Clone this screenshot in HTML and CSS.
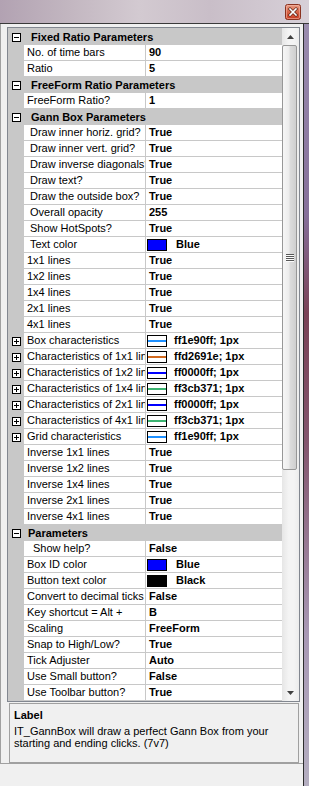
FILE: index.html
```html
<!DOCTYPE html>
<html lang="en">
<head>
  <meta charset="UTF-8">
  <title>IT_GannBox Properties</title>
  <link rel="stylesheet" href="styles.css">
</head>
<body>
  <div class="titlebar">
    <span class="close">
      <svg width="16" height="16" viewBox="0 0 16 16">
        <defs>
          <linearGradient id="closeBg" x1="0" y1="0" x2="0" y2="1">
            <stop offset="0" stop-color="#eba08a"/>
            <stop offset="0.45" stop-color="#d8674a"/>
            <stop offset="1" stop-color="#c8391f"/>
          </linearGradient>
        </defs>
        <rect x="0.5" y="0.5" width="15" height="15" rx="2" fill="url(#closeBg)" stroke="#8a3220"/>
        <rect x="1.5" y="1.5" width="13" height="13" rx="1.5" fill="none" stroke="#f2b8a6" stroke-opacity="0.6"/>
        <path d="M5 5 L11 11 M11 5 L5 11" stroke="#5a2418" stroke-width="3" stroke-linecap="square"/>
        <path d="M5 5 L11 11 M11 5 L5 11" stroke="#ffffff" stroke-width="1.6" stroke-linecap="square"/>
      </svg>
    </span>
  </div>

  <div class="window">
    <div class="client">
      <div class="panel">
        <div class="grid">
          <div class="rows">
            <div class="row cat">
              <div class="gutter"><span class="glyph minus"></span></div>
              <div class="label">Fixed Ratio Parameters</div>
            </div>
            <div class="row"><div class="gutter"></div><div class="name">No. of time bars</div><div class="value">90</div></div>
            <div class="row"><div class="gutter"></div><div class="name">Ratio</div><div class="value">5</div></div>

            <div class="row cat">
              <div class="gutter"><span class="glyph minus"></span></div>
              <div class="label">FreeForm Ratio Parameters</div>
            </div>
            <div class="row"><div class="gutter"></div><div class="name">FreeForm Ratio?</div><div class="value">1</div></div>

            <div class="row cat">
              <div class="gutter"><span class="glyph minus"></span></div>
              <div class="label">Gann Box Parameters</div>
            </div>
            <div class="row"><div class="gutter"></div><div class="name ind1">Draw inner horiz. grid?</div><div class="value">True</div></div>
            <div class="row"><div class="gutter"></div><div class="name ind1">Draw inner vert. grid?</div><div class="value">True</div></div>
            <div class="row"><div class="gutter"></div><div class="name ind1">Draw inverse diagonals?</div><div class="value">True</div></div>
            <div class="row"><div class="gutter"></div><div class="name ind1">Draw text?</div><div class="value">True</div></div>
            <div class="row"><div class="gutter"></div><div class="name ind1">Draw the outside box?</div><div class="value">True</div></div>
            <div class="row"><div class="gutter"></div><div class="name ind1">Overall opacity</div><div class="value">255</div></div>
            <div class="row"><div class="gutter"></div><div class="name ind1">Show HotSpots?</div><div class="value">True</div></div>
            <div class="row"><div class="gutter"></div><div class="name ind1">Text color</div><div class="value"><span class="swatch fill-blue"></span>Blue</div></div>
            <div class="row"><div class="gutter"></div><div class="name">1x1 lines</div><div class="value">True</div></div>
            <div class="row"><div class="gutter"></div><div class="name">1x2 lines</div><div class="value">True</div></div>
            <div class="row"><div class="gutter"></div><div class="name">1x4 lines</div><div class="value">True</div></div>
            <div class="row"><div class="gutter"></div><div class="name">2x1 lines</div><div class="value">True</div></div>
            <div class="row"><div class="gutter"></div><div class="name">4x1 lines</div><div class="value">True</div></div>

            <div class="row"><div class="gutter"><span class="glyph plus"></span></div><div class="name">Box characteristics</div><div class="value"><span class="swatch pen pen-dodger"></span>ff1e90ff; 1px</div></div>
            <div class="row"><div class="gutter"><span class="glyph plus"></span></div><div class="name">Characteristics of 1x1 lines</div><div class="value"><span class="swatch pen pen-choc"></span>ffd2691e; 1px</div></div>
            <div class="row"><div class="gutter"><span class="glyph plus"></span></div><div class="name">Characteristics of 1x2 lines</div><div class="value"><span class="swatch pen pen-blue"></span>ff0000ff; 1px</div></div>
            <div class="row"><div class="gutter"><span class="glyph plus"></span></div><div class="name">Characteristics of 1x4 lines</div><div class="value"><span class="swatch pen pen-green"></span>ff3cb371; 1px</div></div>
            <div class="row"><div class="gutter"><span class="glyph plus"></span></div><div class="name">Characteristics of 2x1 lines</div><div class="value"><span class="swatch pen pen-blue"></span>ff0000ff; 1px</div></div>
            <div class="row"><div class="gutter"><span class="glyph plus"></span></div><div class="name">Characteristics of 4x1 lines</div><div class="value"><span class="swatch pen pen-green"></span>ff3cb371; 1px</div></div>
            <div class="row"><div class="gutter"><span class="glyph plus"></span></div><div class="name">Grid characteristics</div><div class="value"><span class="swatch pen pen-dodger"></span>ff1e90ff; 1px</div></div>

            <div class="row"><div class="gutter"></div><div class="name">Inverse 1x1 lines</div><div class="value">True</div></div>
            <div class="row"><div class="gutter"></div><div class="name">Inverse 1x2 lines</div><div class="value">True</div></div>
            <div class="row"><div class="gutter"></div><div class="name">Inverse 1x4 lines</div><div class="value">True</div></div>
            <div class="row"><div class="gutter"></div><div class="name">Inverse 2x1 lines</div><div class="value">True</div></div>
            <div class="row"><div class="gutter"></div><div class="name">Inverse 4x1 lines</div><div class="value">True</div></div>

            <div class="row cat">
              <div class="gutter"><span class="glyph minus"></span></div>
              <div class="label short">Parameters</div>
            </div>
            <div class="row"><div class="gutter"></div><div class="name ind2">Show help?</div><div class="value">False</div></div>
            <div class="row"><div class="gutter"></div><div class="name">Box ID color</div><div class="value"><span class="swatch fill-blue"></span>Blue</div></div>
            <div class="row"><div class="gutter"></div><div class="name">Button text color</div><div class="value"><span class="swatch fill-black"></span>Black</div></div>
            <div class="row"><div class="gutter"></div><div class="name">Convert to decimal ticks</div><div class="value">False</div></div>
            <div class="row"><div class="gutter"></div><div class="name">Key shortcut = Alt +</div><div class="value">B</div></div>
            <div class="row"><div class="gutter"></div><div class="name">Scaling</div><div class="value">FreeForm</div></div>
            <div class="row"><div class="gutter"></div><div class="name">Snap to High/Low?</div><div class="value">True</div></div>
            <div class="row"><div class="gutter"></div><div class="name">Tick Adjuster</div><div class="value">Auto</div></div>
            <div class="row"><div class="gutter"></div><div class="name">Use Small button?</div><div class="value">False</div></div>
            <div class="row"><div class="gutter"></div><div class="name">Use Toolbar button?</div><div class="value">True</div></div>
          </div>

          <div class="vscroll">
            <div class="arrow">
              <svg width="7" height="4" viewBox="0 0 7 4"><polygon points="3.5,0 7,4 0,4" fill="#404040"/></svg>
            </div>
            <div class="track">
              <div class="thumb"><span class="grip"></span></div>
            </div>
            <div class="arrow">
              <svg width="7" height="4" viewBox="0 0 7 4"><polygon points="0,0 7,0 3.5,4" fill="#404040"/></svg>
            </div>
          </div>
        </div>

        <div class="desc">
          <div class="desc-title">Label</div>
          <div class="desc-text">IT_GannBox will draw a perfect Gann Box from your starting and ending clicks. (7v7)</div>
        </div>
      </div>
    </div>
    <div class="edge"></div>
  </div>
</body>
</html>
```

FILE: styles.css
```css
:root {
  --line: #c8c8c8;
  --frame: #828790;
  --face: #f0f0f0;
}

* {
  box-sizing: border-box;
}

body {
  margin: 0;
  width: 309px;
  height: 786px;
  overflow: hidden;
  background: var(--face);
  font-family: "Liberation Sans", Arial, sans-serif;
  font-size: 11px;
  color: #000;
}

/* title bar */
.titlebar {
  height: 23px;
  display: flex;
  justify-content: flex-end;
  padding: 4px 8px 0 0;
  background: linear-gradient(to right, #b2a2b2 0%, #c2b6c0 22%, #d3cad1 45%, #c9bec8 68%, #d7d0d8 100%);
}

.close {
  width: 16px;
  height: 16px;
  display: block;
}

.close svg {
  display: block;
}

/* window body */
.window {
  display: flex;
  height: 763px;
}

.client {
  width: 304px;
  border-top: 1px solid #3a3a3a;
  border-right: 1px solid #2c2c2c;
  background: var(--face);
}

.edge {
  width: 5px;
  border-top: 1px solid #3a3a3a;
  background: linear-gradient(#9a8cae 0%, #86709a 25%, #7a4256 38%, #84566e 55%, #a898b4 80%, #b4aec0 100%);
}

.panel {
  border-left: 1px solid #a0a0a0;
  border-bottom: 1px solid #a0a0a0;
  padding: 3px 0 0 6px;
}

/* property grid */
.grid {
  width: 293px;
  display: flex;
  border: 1px solid var(--frame);
}

.rows {
  width: 274px;
  border-top: 1px solid var(--line);
}

.row {
  display: flex;
  height: 16px;
}

.gutter {
  width: 16px;
  flex: none;
  background: var(--line);
  padding-left: 4px;
  display: flex;
  align-items: center;
}

.glyph {
  position: relative;
  width: 9px;
  height: 9px;
  border: 1px solid #000;
  background: #fff;
  display: block;
}

.glyph::before,
.glyph.plus::after {
  content: "";
  position: absolute;
  background: #000;
}

.glyph::before {
  left: 1px;
  top: 3px;
  width: 5px;
  height: 1px;
}

.glyph.plus::after {
  left: 3px;
  top: 1px;
  width: 1px;
  height: 5px;
}

.cat .label {
  flex: 1;
  background: var(--line);
  font-weight: bold;
  line-height: 16px;
  padding-left: 7px;
  white-space: nowrap;
}

.cat .label.short {
  padding-left: 4px;
}

.name {
  width: 122px;
  flex: none;
  background: #fff;
  border-right: 1px solid var(--line);
  border-bottom: 1px solid var(--line);
  padding-left: 3px;
  line-height: 15px;
  white-space: nowrap;
  overflow: hidden;
}

.name.ind1 {
  padding-left: 6px;
}

.name.ind2 {
  padding-left: 9px;
}

.value {
  width: 136px;
  flex: none;
  background: #fff;
  border-bottom: 1px solid var(--line);
  padding-left: 3px;
  font-weight: bold;
  line-height: 15px;
  display: flex;
  align-items: flex-start;
  white-space: nowrap;
}

.swatch {
  width: 20px;
  height: 12px;
  margin: 2px 9px 0 -2px;
  border: 1px solid #000;
  flex: none;
}

.swatch.pen {
  margin-right: 7px;
  background: #fff;
  display: flex;
  align-items: center;
}

.swatch.pen::before {
  content: "";
  width: 100%;
  height: 2px;
  background: currentColor;
}

.fill-blue { background: #0000ff; }
.fill-black { background: #000; }
.pen-dodger { color: #1e90ff; }
.pen-choc { color: #d2691e; }
.pen-blue { color: #0000ff; }
.pen-green { color: #3cb371; }

/* scrollbar */
.vscroll {
  width: 17px;
  display: flex;
  flex-direction: column;
  background: linear-gradient(to right, #e6e6e6, #f4f4f4 40%, #f4f4f4 70%, #ececec);
}

.arrow {
  height: 17px;
  flex: none;
  display: flex;
  align-items: center;
  justify-content: center;
  padding-right: 1px;
}

.arrow svg {
  display: block;
}

.track {
  flex: 1;
}

.thumb {
  width: 15px;
  height: 425px;
  border: 1px solid #979797;
  border-radius: 2px;
  background: linear-gradient(to right, #f6f6f6, #ececec 45%, #dcdcdc 55%, #cfcfcf);
  display: flex;
  align-items: center;
  justify-content: center;
}

.grip {
  width: 8px;
  height: 8px;
  background: repeating-linear-gradient(#575757 0 1px, #fbfbfb 1px 2px);
}

/* description pane */
.desc {
  width: 290px;
  height: 60px;
  margin: 1px 0 0 2px;
  border: 1px solid #a0a0a0;
  padding: 4px 4px 0;
  background: var(--face);
}

.desc-title {
  font-weight: bold;
  line-height: 14px;
}

.desc-text {
  margin-top: 3px;
  line-height: 12px;
}
```
